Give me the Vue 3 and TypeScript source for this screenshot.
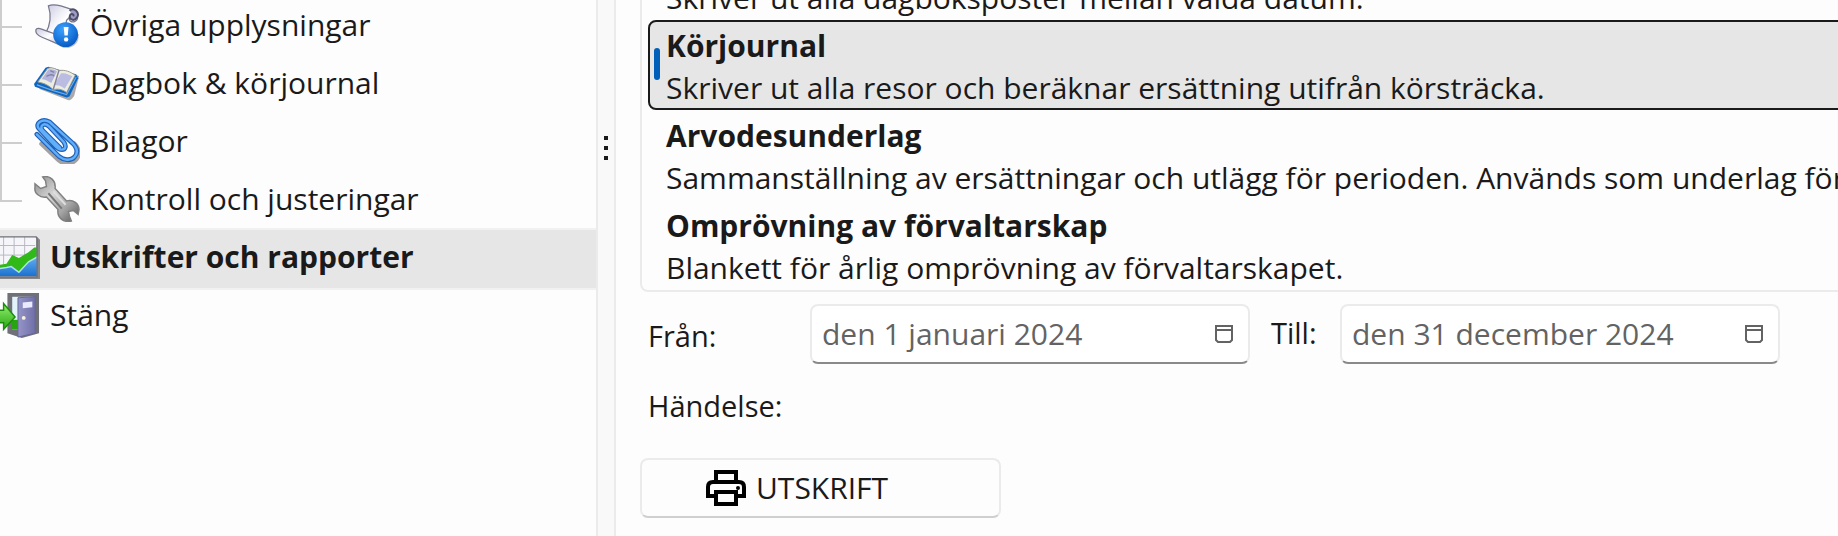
<script setup lang="ts">
import { ref } from 'vue'

interface NavItem { label: string; icon: string; child: boolean }
interface Report { title?: string; text: string }

const nav: NavItem[] = [
  { label: 'Övriga upplysningar', icon: 'scroll', child: true },
  { label: 'Dagbok & körjournal', icon: 'book', child: true },
  { label: 'Bilagor', icon: 'clip', child: true },
  { label: 'Kontroll och justeringar', icon: 'wrench', child: true },
  { label: 'Utskrifter och rapporter', icon: 'chart', child: false },
  { label: 'Stäng', icon: 'door', child: false },
]
const activeNav = ref(4)

const reports: Report[] = [
  { text: 'Skriver ut alla dagboksposter mellan valda datum.' },
  { title: 'Körjournal', text: 'Skriver ut alla resor och beräknar ersättning utifrån körsträcka.' },
  { title: 'Arvodesunderlag', text: 'Sammanställning av ersättningar och utlägg för perioden. Används som underlag för' },
  { title: 'Omprövning av förvaltarskap', text: 'Blankett för årlig omprövning av förvaltarskapet.' },
]
const activeReport = ref(1)

const from = ref('den 1 januari 2024')
const to = ref('den 31 december 2024')
</script>

<template>
  <div class="window">
    <nav class="sidebar">
      <button
        v-for="(item, i) in nav"
        :key="item.label"
        type="button"
        class="nav-row"
        :class="{ child: item.child, last: i === 3, active: i === activeNav }"
        @click="activeNav = i"
      >
        <span v-if="item.child" class="branch"></span>
        <svg v-if="item.icon === 'scroll'" class="icon" viewBox="0 0 48 48">
          <defs>
            <linearGradient id="paper" x1="0" y1="0" x2="1" y2="1">
              <stop offset="0" stop-color="#c9c9e2" /><stop offset=".5" stop-color="#ffffff" /><stop offset="1" stop-color="#b4b4cc" />
            </linearGradient>
            <radialGradient id="info" cx=".4" cy=".3" r=".8">
              <stop offset="0" stop-color="#3da2ff" /><stop offset="1" stop-color="#0052bd" />
            </radialGradient>
          </defs>
          <path d="M4 34c4 0 8 4 13 7l14 7c6 1 13-2 15-8l1-6-8-5z" fill="#555" opacity=".35" />
          <path d="M15 4c4-2 9-1 13 0l12 4c6 3 7 10 3 12-3 2-7 0-6-4l-3 3-4 22-18-8c5-9 6-20 3-29z" fill="url(#paper)" stroke="#77778c" stroke-width="1.3" />
          <path d="M37 9c5-4 11 2 8 7s-10 2-7-3c2-1 4 0 3 2" fill="#9c9cc4" stroke="#4c4c66" stroke-width="2" />
          <path d="M2 29c1-3 5-1 8 0l19 7-1 9L9 37c-5-2-8-4-7-8z" fill="url(#paper)" stroke="#77778c" stroke-width="1.3" />
          <circle cx="33" cy="34" r="13" fill="url(#info)" />
          <path d="M31 26h5l-.8 9h-3.400z" fill="#fff" /><circle cx="33.500" cy="39" r="2.300" fill="#fff" />
        </svg>
        <svg v-else-if="item.icon === 'book'" class="icon" viewBox="0 0 48 48">
          <path d="M5 30l31 12c3 0 5-3 6-5l5-20-5-3z" fill="#444" opacity=".45" />
          <path d="M0 25L12 8l3-1 29 8 2 4-9 19-3 1L1 28z" fill="#0c66c4" />
          <path d="M4 23L14 9c4-2 8 0 12 2 6-1 12 1 17 5L34 34c-5-4-10-4-14-3-5-5-10-7-16-8z" fill="#ececdf" stroke="#98988e" stroke-width="1" />
          <path d="M8 20l7-10c3-1 7 0 9 2l-6 12c-3-2-6-4-10-4z" fill="#b3b4dd" />
          <path d="M21 26l7-12c4-1 8 1 12 3l-8 13c-3-3-7-4-11-4z" fill="#bbbce2" />
          <path d="M26 11l-6 20M13 17c4-2 7-2 8 0M17 11l4 2" stroke="#82829e" stroke-width="1.500" fill="none" />
          <path d="M3 26l17 6 14 4 10-18" stroke="#75a9db" stroke-width="1.200" fill="none" />
        </svg>
        <svg v-else-if="item.icon === 'clip'" class="icon" viewBox="0 0 48 48" fill="none" stroke-linecap="round">
          <path d="M8 27l18 17c6 5 14 4 18-1s3-11-2-16" stroke="#333" stroke-width="5" opacity=".45" />
          <path d="M27 31L9 13C5 8 11 4 16 9l15 16c3 4 2 8-2 8s-6-3-9-6L5 11C1 6 8 0 16 4l24 22c6 6 6 11 2 15s-11 3-16-1L3 17" stroke="#1f61b8" stroke-width="5" />
          <path d="M27 31L9 13C5 8 11 4 16 9l15 16c3 4 2 8-2 8s-6-3-9-6L5 11C1 6 8 0 16 4l24 22c6 6 6 11 2 15s-11 3-16-1L3 17" stroke="#61aefa" stroke-width="2.500" />
        </svg>
        <svg v-else-if="item.icon === 'wrench'" class="icon" viewBox="0 0 48 48">
          <defs>
            <linearGradient id="steel" x1="0" y1="0" x2="1" y2="1">
              <stop offset="0" stop-color="#8b8b8b" /><stop offset=".4" stop-color="#d6d6d6" /><stop offset=".7" stop-color="#a4a4a4" /><stop offset="1" stop-color="#555555" />
            </linearGradient>
          </defs>
          <path d="M9 1c8-2 14 4 13 12l12 13c7-2 13 3 13 9l-1 5-5-4-5 1 1 5 2 5c-9 2-15-4-14-12L13 22C6 23 0 18 1 12V8l6 5 6-2-1-6z" fill="url(#steel)" stroke="#808080" stroke-width="1.500" />
          <path d="M15 18l14 16" stroke="#777" stroke-width="2" /><path d="M20 16l13 14" stroke="#dedede" stroke-width="2" />
        </svg>
        <svg v-else-if="item.icon === 'chart'" class="icon" viewBox="0 0 48 48">
          <defs>
            <linearGradient id="water" x1="0" y1="0" x2="0" y2="1"><stop offset="0" stop-color="#62adf2" /><stop offset="1" stop-color="#1b71ce" /></linearGradient>
          </defs>
          <path d="M0 3h45l3 3v41H0z" fill="#888" />
          <path d="M0 3h44v41H0z" fill="#f5f5fa" />
          <path d="M0 12h43M0 22h43M10 3v30M21 3v30M32 3v30" stroke="#b7b7c2" stroke-width="1" />
          <path d="M0 32h6l7-1 6-9 7 3 10-6 6-5h3v19L25 40 0 38z" fill="#30b918" />
          <path d="M0 37l13-2 5-1 8 6 10-11 9-5v20H0z" fill="url(#water)" />
          <path d="M0 37l13-2 5-1 8 6 10-11 9-5" stroke="#b0e1ef" stroke-width="1.500" fill="none" />
          <path d="M0 3h44l1 2v40H0" stroke="#72727e" stroke-width="1.500" fill="none" />
        </svg>
        <svg v-else class="icon" viewBox="0 0 48 48">
          <defs>
            <linearGradient id="leaf" x1="0" y1="0" x2="1" y2="0"><stop offset="0" stop-color="#9595c9" /><stop offset="1" stop-color="#7070a8" /></linearGradient>
            <linearGradient id="arrow" x1="0" y1="0" x2="0" y2="1"><stop offset="0" stop-color="#93f06e" /><stop offset="1" stop-color="#27a512" /></linearGradient>
          </defs>
          <path d="M14 1h33v42l-18 5-15-5z" fill="#707078" />
          <path d="M19 5h22v34H19z" fill="#e1f4fb" /><path d="M18 29h7v10h-7z" fill="#28a410" />
          <path d="M25 6l18-1v38l-18 4z" fill="url(#leaf)" stroke="#656599" stroke-width="1" />
          <path d="M30 11l10-1v6l-10 1z" fill="#e9e9ff" /><circle cx="31" cy="27" r="2" fill="#f5f2dd" />
          <path d="M0 19h10v-7l12 14-12 13v-7H0z" fill="url(#arrow)" stroke="#1c8c0c" stroke-width="1.500" />
        </svg>
        <span class="nav-label">{{ item.label }}</span>
      </button>
    </nav>

    <div class="splitter" role="separator" aria-orientation="vertical">
      <span></span><span></span><span></span>
    </div>

    <main class="content">
      <ul class="reports">
        <li v-for="(r, i) in reports" :key="r.text">
          <button type="button" class="report" :class="{ active: i === activeReport, untitled: !r.title }" @click="activeReport = i">
            <strong v-if="r.title">{{ r.title }}</strong>
            <span>{{ r.text }}</span>
          </button>
        </li>
      </ul>

      <form class="filters" @submit.prevent>
        <div class="dates">
          <label class="from-label" for="from">Från:</label>
          <div class="field">
            <input id="from" v-model="from" type="text" />
            <button type="button" aria-label="Välj startdatum">
              <svg viewBox="0 0 18 18"><path d="M1 1h16v14l-2 2H3l-2-2zM1 5h16" /></svg>
            </button>
          </div>
          <label class="to-label" for="to">Till:</label>
          <div class="field">
            <input id="to" v-model="to" type="text" />
            <button type="button" aria-label="Välj slutdatum">
              <svg viewBox="0 0 18 18"><path d="M1 1h16v14l-2 2H3l-2-2zM1 5h16" /></svg>
            </button>
          </div>
        </div>
        <p class="event">Händelse:</p>
        <button type="button" class="print">
          <svg viewBox="0 0 40 36" fill="none" stroke="#000" stroke-width="4">
            <path d="M10 12V2h20v10M10 26H2V17q0-5 5-5h26q5 0 5 5v9h-8" />
            <path d="M10 22h20v12H10z" /><circle cx="32" cy="18" r="2" fill="#000" stroke="none" />
          </svg>
          UTSKRIFT
        </button>
      </form>
    </main>
  </div>
</template>

<style>
body {
  margin: 0;
  background: #fdfdfd;
}
</style>

<style scoped>
.window {
  display: flex;
  height: 100vh;
  overflow: hidden;
  background: #fdfdfd;
  color: #1a1a1a;
  font-family: 'Open Sans', 'Noto Sans', sans-serif;
  font-size: 30px;
  line-height: 42px;
}
button, input {
  font: inherit;
  color: inherit;
  background: none;
  border: 0;
  padding: 0;
  margin: 0;
}
.sidebar {
  flex: 0 0 596px;
  display: flex;
  flex-direction: column;
  margin-top: -2px;
}
.nav-row {
  display: flex;
  align-items: center;
  flex: 0 0 58px;
  text-align: left;
  white-space: nowrap;
}
.nav-row.active {
  background: #e6e6e6;
  box-shadow: 0 -2px #f1f1f1, 0 2px #f1f1f1;
  font-weight: 700;
}
.branch {
  align-self: stretch;
  width: 22px;
  margin-right: 12px;
  border-left: 2px solid #cdcdcd;
  box-sizing: border-box;
  background: linear-gradient(#cdcdcd, #cdcdcd) 0 28px / 100% 2px no-repeat;
}
.last .branch {
  height: 30px;
  align-self: flex-start;
}
.icon {
  flex: none;
  width: 46px;
  height: 46px;
  margin-bottom: 4px;
}
.nav-row:not(.child) .icon {
  margin-left: -6px;
}
.nav-label {
  margin: 0 0 4px 10px;
}
.splitter {
  flex: 0 0 20px;
  box-sizing: border-box;
  border: solid #ebebeb;
  border-width: 0 2px;
  background: #f9f9f9;
  display: flex;
  flex-direction: column;
  align-items: center;
  gap: 6px;
  padding-top: 136px;
}
.splitter span {
  width: 4px;
  height: 4px;
  background: #1a1a1a;
}
.content {
  flex: 1;
  min-width: 0;
  padding-left: 24px;
}
.reports {
  list-style: none;
  margin: -72px 0 0;
  padding: 0 0 0 6px;
  border: 2px solid #ebebeb;
  border-right: 0;
  border-radius: 0 0 0 8px;
}
.reports li {
  overflow: hidden;
}
.report {
  display: flex;
  flex-direction: column;
  box-sizing: border-box;
  width: calc(100% + 20px);
  height: 90px;
  padding: 3px 0 0 16px;
  border: 2px solid transparent;
  border-radius: 8px;
  text-align: left;
  white-space: nowrap;
}
.report.untitled {
  padding-top: 45px;
}
.report.active {
  border-color: #1a1a1a;
  background: #e6e6e6;
  position: relative;
}
.report.active::before {
  content: '';
  position: absolute;
  left: 4px;
  top: 26px;
  width: 6px;
  height: 32px;
  border-radius: 3px;
  background: #005fb8;
}
.filters {
  display: flex;
  flex-direction: column;
  align-items: flex-start;
  padding-top: 12px;
}
.dates {
  display: flex;
  align-items: center;
  width: 100%;
}
.from-label, .to-label, .event {
  font-size: 29px;
}
.from-label {
  flex: 0 0 162px;
  padding: 3px 0 0 8px;
}
.to-label {
  flex: 0 0 69px;
  margin-left: 21px;
  padding-bottom: 3px;
}
.field {
  flex: 0 1 440px;
  display: flex;
  align-items: center;
  box-sizing: border-box;
  height: 60px;
  padding: 0 15px 0 10px;
  border: 2px solid #ebebeb;
  border-bottom-color: #8a8a8a;
  border-radius: 8px;
  background: #fff;
  color: #636363;
}
.field input {
  flex: 1;
  min-width: 0;
  outline: 0;
}
.field button, .field svg {
  display: block;
  width: 18px;
  height: 18px;
}
.field svg {
  fill: none;
  stroke: #636363;
  stroke-width: 2;
}
.event {
  margin: 21px 0 0 8px;
}
.print {
  display: flex;
  align-items: center;
  gap: 10px;
  box-sizing: border-box;
  width: 361px;
  height: 60px;
  margin-top: 31px;
  padding-left: 64px;
  border: 2px solid #ebebeb;
  border-bottom-color: #cfcfcf;
  border-radius: 8px;
}
.print svg {
  width: 40px;
  height: 36px;
}
</style>
